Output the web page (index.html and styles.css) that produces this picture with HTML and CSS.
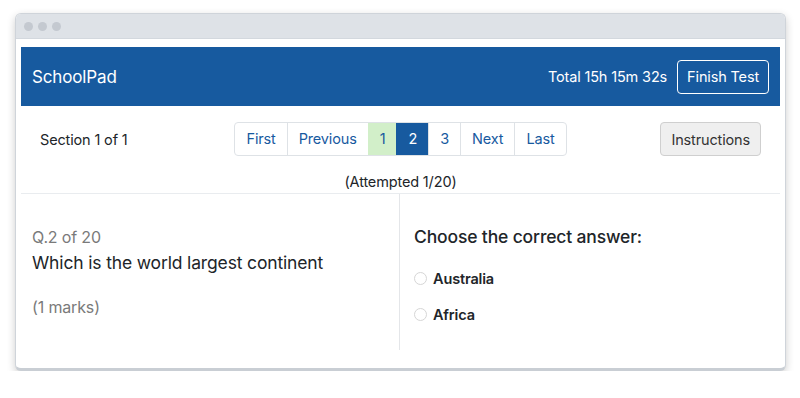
FILE: index.html
```html
<!DOCTYPE html>
<html>
  <head>
    <title>SchoolPad Test</title>
    <meta charset="utf-8">
    <link rel="stylesheet" href="styles.css">
  </head>
  <body>
    <div class="window">
      <div class="titlebar">
        <span class="dot"></span><span class="dot"></span><span class="dot"></span>
      </div>
      <div class="content">
        <header class="topbar">
          <div class="brand">SchoolPad</div>
          <div class="timer">
            <span>Total 15h 15m 32s</span>
            <button class="btn-finish">Finish Test</button>
          </div>
        </header>

        <div class="toolbar">
          <div class="section">Section 1 of 1</div>
          <ul class="pager">
            <li>First</li>
            <li>Previous</li>
            <li class="answered">1</li>
            <li class="active">2</li>
            <li>3</li>
            <li>Next</li>
            <li>Last</li>
          </ul>
          <div class="right">
            <button class="btn-instr">Instructions</button>
          </div>
        </div>
        <div class="attempted">(Attempted 1/20)</div>

        <div class="question">
          <div class="q-left">
            <div class="q-num">Q.2 of 20</div>
            <div class="q-text">Which is the world largest continent</div>
            <div class="q-marks">(1 marks)</div>
          </div>
          <div class="q-right">
            <div class="q-head">Choose the correct answer:</div>
            <label class="option"><span class="radio"></span>Australia</label>
            <label class="option"><span class="radio"></span>Africa</label>
          </div>
        </div>
      </div>
    </div>
  </body>
</html>
```

FILE: styles.css
```css
body {
  margin: 0;
  padding: 13px 14px 0 15px;
  background: #fff;
  font-family: Inter, "Noto Sans", sans-serif;
  color: #212529;
  letter-spacing: -0.15px;
}
.window {
  height: 354px;
  border: 1px solid #cfd4da;
  border-bottom: 3px solid #c9ced4;
  border-radius: 6px;
  overflow: hidden;
  box-shadow: 0 3px 8px rgba(0, 0, 0, 0.2);
  background: #fff;
}
.titlebar {
  height: 24px;
  background: #dee2e7;
  border-bottom: 1px solid #d3d8de;
  display: flex;
  align-items: center;
  gap: 5px;
  padding-left: 8px;
}
.dot {
  width: 9px;
  height: 9px;
  border-radius: 50%;
  background: #c4c9d0;
}
.content {
  padding: 8px 5px 0 5px;
}
.topbar {
  height: 59px;
  background: #175a9f;
  color: #fff;
  display: flex;
  align-items: center;
  justify-content: space-between;
  padding: 0 11px;
}
.brand {
  font-size: 17px;
}
.timer {
  display: flex;
  align-items: center;
  gap: 10px;
  font-size: 14.5px;
}
.btn-finish {
  font-family: inherit;
  font-size: 14.5px;
  letter-spacing: -0.15px;
  color: #fff;
  background: transparent;
  border: 1px solid #fff;
  border-radius: 4px;
  height: 34px;
  padding: 0 9px;
}
.toolbar {
  display: grid;
  grid-template-columns: 1fr auto 1fr;
  align-items: center;
  margin-top: 16px;
}
.section {
  padding-left: 19px;
  font-size: 14.5px;
}
.pager {
  list-style: none;
  margin: 0;
  padding: 0;
  display: flex;
  border: 1px solid #dee2e6;
  border-radius: 4px;
  overflow: hidden;
}
.pager li {
  height: 32px;
  line-height: 32px;
  padding: 0 11px;
  color: #175a9f;
  font-size: 14.5px;
  border-left: 1px solid #dee2e6;
}
.pager li:first-child {
  border-left: none;
}
.pager .answered {
  background: #d2efc9;
  border-left-color: #d2efc9;
}
.pager .active {
  background: #175a9f;
  color: #fff;
  border-left-color: #175a9f;
}
.right {
  display: flex;
  justify-content: flex-end;
  padding-right: 19px;
}
.btn-instr {
  font-family: inherit;
  font-size: 14.5px;
  letter-spacing: -0.15px;
  color: #333;
  background: #efefef;
  border: 1px solid #cfcfcf;
  border-radius: 4px;
  height: 34px;
  padding: 0 10px;
}
.attempted {
  text-align: center;
  font-size: 14.5px;
  padding: 17px 0 3px;
  border-bottom: 1px solid #e9ecef;
}
.question {
  display: grid;
  grid-template-columns: 379px 1fr;
  height: 156px;
}
.q-left {
  border-right: 1px solid #e4e6e9;
  padding: 33px 11px 0;
}
.q-num {
  color: #7a7a7a;
  font-size: 16px;
}
.q-text {
  font-size: 17.5px;
  margin-top: 5px;
}
.q-marks {
  color: #7a7a7a;
  font-size: 16px;
  margin-top: 24px;
}
.q-right {
  padding: 32px 14px 0;
}
.q-head {
  font-size: 17.5px;
  font-weight: 500;
  margin-bottom: 13px;
}
.option {
  display: flex;
  align-items: center;
  font-size: 14.5px;
  font-weight: 600;
  height: 36px;
}
.radio {
  width: 11px;
  height: 11px;
  border: 1px solid #d6d6d6;
  border-radius: 50%;
  margin-right: 6px;
}
```
